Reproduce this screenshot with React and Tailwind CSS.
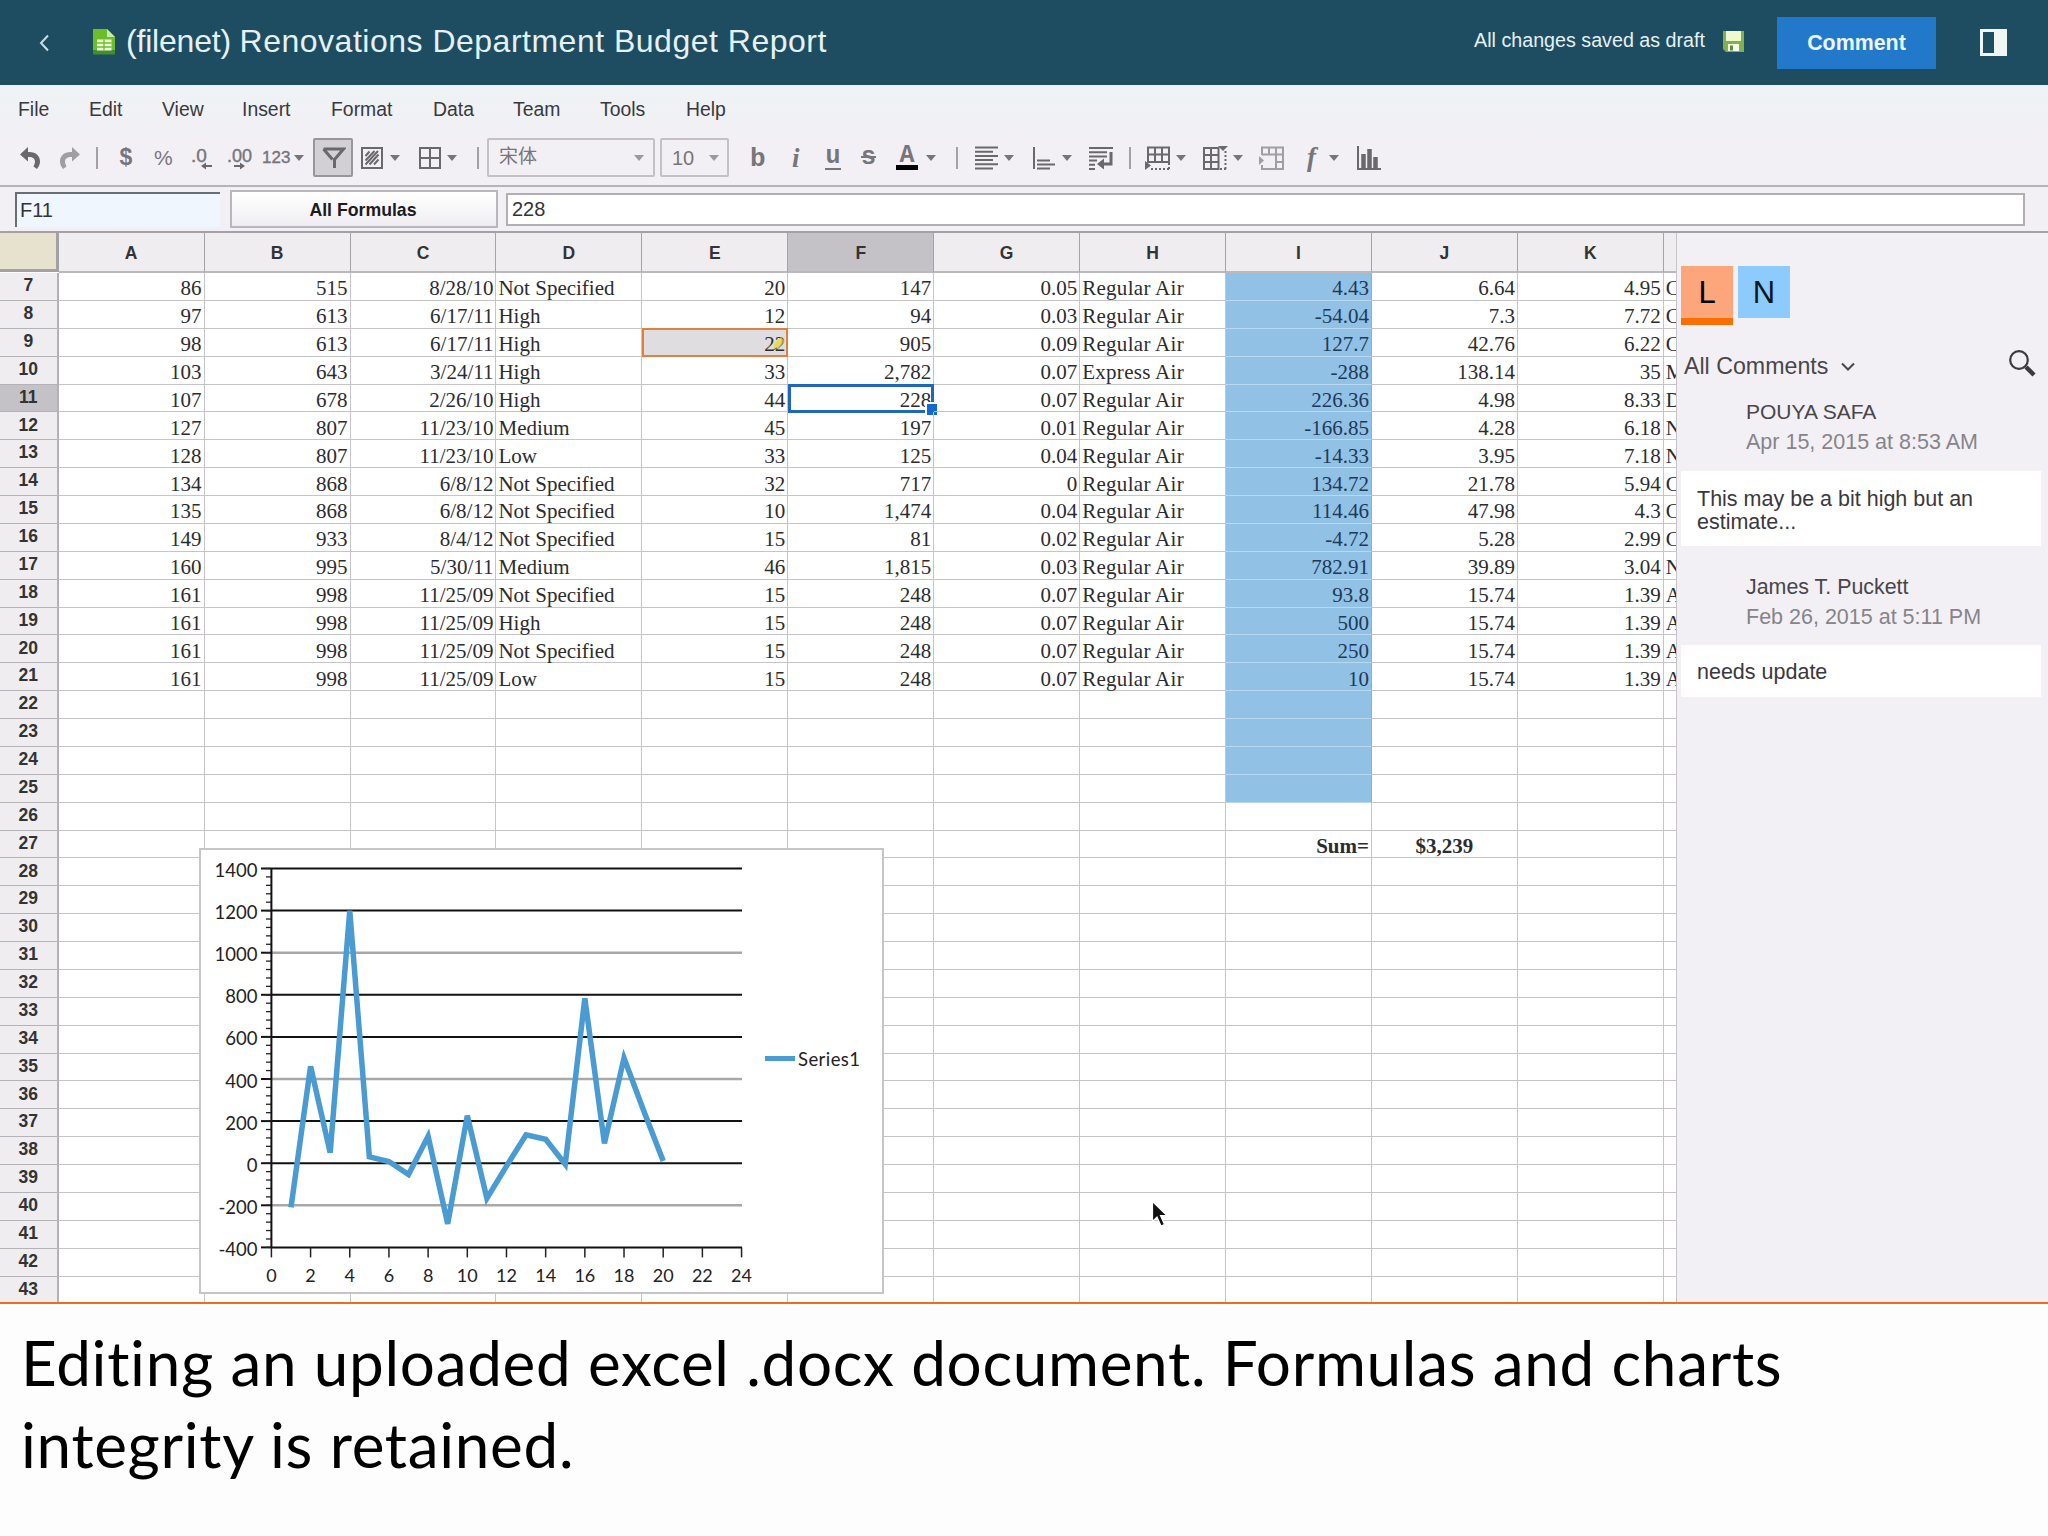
import React from 'react'

const columns = ['A', 'B', 'C', 'D', 'E', 'F', 'G', 'H', 'I', 'J', 'K']

const data = {
  7: ['86', '515', '8/28/10', 'Not Specified', '20', '147', '0.05', 'Regular Air', '4.43', '6.64', '4.95', 'C'],
  8: ['97', '613', '6/17/11', 'High', '12', '94', '0.03', 'Regular Air', '-54.04', '7.3', '7.72', 'C'],
  9: ['98', '613', '6/17/11', 'High', '22', '905', '0.09', 'Regular Air', '127.7', '42.76', '6.22', 'C'],
  10: ['103', '643', '3/24/11', 'High', '33', '2,782', '0.07', 'Express Air', '-288', '138.14', '35', 'M'],
  11: ['107', '678', '2/26/10', 'High', '44', '228', '0.07', 'Regular Air', '226.36', '4.98', '8.33', 'D'],
  12: ['127', '807', '11/23/10', 'Medium', '45', '197', '0.01', 'Regular Air', '-166.85', '4.28', '6.18', 'N'],
  13: ['128', '807', '11/23/10', 'Low', '33', '125', '0.04', 'Regular Air', '-14.33', '3.95', '7.18', 'N'],
  14: ['134', '868', '6/8/12', 'Not Specified', '32', '717', '0', 'Regular Air', '134.72', '21.78', '5.94', 'C'],
  15: ['135', '868', '6/8/12', 'Not Specified', '10', '1,474', '0.04', 'Regular Air', '114.46', '47.98', '4.3', 'C'],
  16: ['149', '933', '8/4/12', 'Not Specified', '15', '81', '0.02', 'Regular Air', '-4.72', '5.28', '2.99', 'C'],
  17: ['160', '995', '5/30/11', 'Medium', '46', '1,815', '0.03', 'Regular Air', '782.91', '39.89', '3.04', 'N'],
  18: ['161', '998', '11/25/09', 'Not Specified', '15', '248', '0.07', 'Regular Air', '93.8', '15.74', '1.39', 'A'],
  19: ['161', '998', '11/25/09', 'High', '15', '248', '0.07', 'Regular Air', '500', '15.74', '1.39', 'A'],
  20: ['161', '998', '11/25/09', 'Not Specified', '15', '248', '0.07', 'Regular Air', '250', '15.74', '1.39', 'A'],
  21: ['161', '998', '11/25/09', 'Low', '15', '248', '0.07', 'Regular Air', '10', '15.74', '1.39', 'A'],
  27: ['', '', '', '', '', '', '', '', 'Sum=', '$3,239', '', ''],
}

const rows = Array.from({ length: 37 }, (_, i) => i + 7)

const menus = [
  ['File', 'w-[71px]'],
  ['Edit', 'w-[73px]'],
  ['View', 'w-[80px]'],
  ['Insert', 'w-[89px]'],
  ['Format', 'w-[102px]'],
  ['Data', 'w-[80px]'],
  ['Team', 'w-[87px]'],
  ['Tools', 'w-[86px]'],
  ['Help', 'w-[60px]'],
]

const series = [-210, 460, 50, 1200, 30, 8, -54, 128, -288, 226, -167, -14, 135, 114, -5, 783, 94, 500, 250, 10]

function Caret({ className = '' }) {
  return (
    <svg className={'shrink-0 ' + className} width="10" height="6" viewBox="0 0 10 6">
      <path d="M0 0h10L5 6z" fill="#77757a" />
    </svg>
  )
}

function Separator({ className }) {
  return <div className={'h-[22px] w-[2px] shrink-0 bg-[#a3a1a6] ' + className} />
}

function Icon({ className, w = 24, h = 24, children }) {
  return (
    <svg className={'shrink-0 ' + className} width={w} height={h} viewBox={`0 0 ${w} ${h}`} fill="none" stroke="#6a686d" strokeWidth="2">
      {children}
    </svg>
  )
}

function Header() {
  return (
    <div className="flex h-[85px] items-center bg-[#1e4c60] text-[#e4f1f5]">
      <svg className="ml-[39px] shrink-0" width="11" height="18" viewBox="0 0 11 18" fill="none" stroke="#c9dde4" strokeWidth="2">
        <path d="M9 1.500L2 9l7 7.500" />
      </svg>
      <svg className="mb-[3px] ml-[43px] shrink-0" width="22" height="27" viewBox="0 0 22 27">
        <path d="M0 1h14l8 8v17H0z" fill="#6cbd2c" />
        <path d="M0 22h22v4.500H0z" fill="#3f8f2a" />
        <path d="M14 1l8 8h-8z" fill="#c9eba6" />
        <path d="M4 11.500h14.500v11H4z" fill="#eefbd8" />
        <path d="M4 15h14.500M4 19h14.500M11 11.500v11" stroke="#6cbd2c" strokeWidth="1.300" />
      </svg>
      <h1 className="mb-[3px] ml-[11px] whitespace-nowrap text-[32px]">
        <span className="-tracking-[0.2px]">(filenet) </span>
        <span className="tracking-[0.5px]">Renovations Department Budget Report</span>
      </h1>
      <div className="ml-auto flex items-center">
        <span className="mb-[4px] whitespace-nowrap text-[19.700px]">All changes saved as draft</span>
        <svg className="mb-[3px] ml-[18px]" width="21" height="21" viewBox="0 0 21 21">
          <path d="M0 0h21v21H3l-3-3z" fill="#7fb24c" />
          <path d="M3 0h15v10H3z" fill="#eef9d0" />
          <path d="M5 13h11v7H5z" fill="#f4fbe6" />
          <path d="M7 14.500h3v5H7z" fill="#5d8f35" />
        </svg>
        <button className="ml-[33px] mt-[1px] h-[52px] w-[159px] bg-[#2379c9] text-[21.400px] font-bold text-[#eef6fd]">Comment</button>
        <svg className="ml-[44px] mr-[41px]" width="27" height="27" viewBox="0 0 27 27">
          <path d="M1.500 1.500h24v24h-24z" fill="#1e4c60" stroke="#f0f6f3" strokeWidth="3" />
          <path d="M14 0h13v27H14z" fill="#f0f6f3" />
        </svg>
      </div>
    </div>
  )
}

function MenuBar() {
  return (
    <div className="flex h-12 items-center bg-gradient-to-b from-[#eef3f6] to-[#f2f0f4] pl-[18px] pt-[2px] text-[19.400px] text-[#3a383d]">
      {menus.map(([name, width]) => (
        <div key={name} className={'shrink-0 ' + width}>{name}</div>
      ))}
    </div>
  )
}

function Toolbar() {
  return (
    <div className="flex h-[54px] items-center border-b-2 border-[#b5b3b8] pb-[3px] text-[#77757a]">
      <Icon className="ml-[19px]" w={23}>
        <path d="M9 1L1 8.500 9 15.500v-4.500c6-.5 9 3 5.500 9.500l3.500 2.500C24.500 15 20 5 9 6z" fill="#6a686d" stroke="none" />
      </Icon>
      <Icon className="ml-[16px] opacity-60" w={23}>
        <path d="M14 1l8 7.500-8 7v-4.500c-6-.5-9 3-5.500 9.500L5 23C-1.500 15 3 5 14 6z" fill="#6a686d" stroke="none" />
      </Icon>
      <Separator className="ml-[15px]" />
      <span className="ml-[20px] w-[16px] shrink-0 text-center text-[23px] font-bold">$</span>
      <span className="ml-[20px] w-[20px] shrink-0 text-[21px]">%</span>
      <Icon className="ml-[17px]" w={22}>
        <text x="0" y="16" fontSize="19" fill="#77757a" stroke="#77757a" strokeWidth=".4" fontFamily="Liberation Sans">.0</text>
        <path d="M13 20h8" />
        <path d="M10 20l5-3.500v7z" fill="#6a686d" stroke="none" />
      </Icon>
      <Icon className="ml-[14px]" w={26}>
        <text x="0" y="16" fontSize="18" fill="#77757a" stroke="#77757a" strokeWidth=".4" fontFamily="Liberation Sans">.00</text>
        <path d="M7 20h7" />
        <path d="M18 20l-5-3.500v7z" fill="#6a686d" stroke="none" />
      </Icon>
      <span className="ml-[9px] w-[28px] shrink-0 text-[17px] [-webkit-text-stroke:0.4px_#77757a]">123</span>
      <Caret className="ml-[4px]" />
      <div className="ml-[9px] flex h-[39px] w-[40px] shrink-0 items-center justify-center rounded-[2px] border-2 border-[#98969b] bg-[#d2d0d4]">
        <Icon className="" w={25}>
          <path d="M2.500 3h20l-9 10.500v8.500M2.500 3l9 10.500" strokeWidth="3" />
        </Icon>
      </div>
      <Icon className="ml-[8px]" w={22} h={22}>
        <path d="M1 1h20v20H1z" />
        <path d="M4.500 9l4-4.500M4.500 13.500l9-9.500M4.500 17.500l12.500-13.500M8.500 17.500l9-10M13 17.500l4.500-5" />
      </Icon>
      <Caret className="ml-[7px]" />
      <Icon className="ml-[19px]" w={22} h={22}>
        <path d="M1 1h20v20H1zM11 1v20M1 11h20" />
      </Icon>
      <Caret className="ml-[6px]" />
      <Separator className="ml-[20px]" />
      <div className="ml-[8px] flex h-[39px] w-[168px] shrink-0 items-center justify-between rounded-[2px] border-2 border-[#c3c1c6] pl-[10px] pr-[9px]">
        <span className="font-['Liberation_Sans','Noto_Sans_CJK_SC',sans-serif] text-[19px]">宋体</span>
        <Caret className="opacity-70" />
      </div>
      <div className="ml-[5px] flex h-[39px] w-[69px] shrink-0 items-center justify-between rounded-[2px] border-2 border-[#c3c1c6] pl-[10px] pr-[8px]">
        <span className="text-[20px]">10</span>
        <Caret className="opacity-70" />
      </div>
      <span className="ml-[21px] mt-[2px] w-[18px] shrink-0 font-['Liberation_Mono'] text-[26px] font-bold leading-none">b</span>
      <span className="ml-[20px] mt-[2px] w-[18px] shrink-0 font-['Liberation_Serif'] text-[27px] font-bold italic leading-none pl-[4px]">i</span>
      <span className="ml-[19px] mt-[3px] flex h-[22px] w-[16px] shrink-0 justify-center border-b-2 border-[#77757a] font-['Liberation_Mono'] text-[25px] font-bold leading-[17px]">u</span>
      <span className="ml-[20px] w-[17px] shrink-0 font-['Liberation_Mono'] text-[25px] font-bold leading-none line-through decoration-2">s</span>
      <span className="ml-[18px] mt-[1px] flex h-[24px] w-[22px] shrink-0 justify-center border-b-[5px] border-black font-['Liberation_Mono'] text-[25px] font-bold leading-[20px]">A</span>
      <Caret className="ml-[8px]" />
      <Separator className="ml-[20px]" />
      <Icon className="ml-[17px]" w={24}>
        <path d="M0 1.500h23M0 5.700h18M0 9.900h23M0 14.100h18M0 18.300h23M0 22.500h18" />
      </Icon>
      <Caret className="ml-[5px]" />
      <Icon className="ml-[19px]" w={24}>
        <path d="M1 1v22M4 14.500h13M4 18.500h18M4 22.500h13" />
      </Icon>
      <Caret className="ml-[5px]" />
      <Icon className="ml-[17px]" w={24}>
        <path d="M0 2h24M0 6.200h18M0 10.400h18M0 14.600h8M0 18.800h6M0 23h6" />
        <path d="M22 6v12H14" strokeWidth="3" />
        <path d="M8 18l7-5.500v11z" fill="#6a686d" stroke="none" />
      </Icon>
      <Separator className="ml-[16px]" />
      <Icon className="ml-[14px]" w={26}>
        <path d="M3 1.500h21v14.500H3zM3 8.500h21M10 1.500V16M17 1.500V16" />
        <path d="M0 15l6 4.500L0 24z" fill="#6a686d" stroke="none" />
        <path d="M6 23h19M24 17v6" strokeDasharray="2 2" />
      </Icon>
      <Caret className="ml-[5px]" />
      <Icon className="ml-[17px]" w={26}>
        <path d="M1 2h14.500v21H1zM1 9h14.500M1 16h14.500M8 2v21" />
        <path d="M15 0h10l-5 5z" fill="#6a686d" stroke="none" />
        <path d="M22.500 5v18M17 23h6" strokeDasharray="2 2" />
      </Icon>
      <Caret className="ml-[4px]" />
      <Icon className="ml-[16px] opacity-60" w={26}>
        <path d="M3 9V1.500h21V23H3v-4M3 8.500h21M10 1.500v7M17 1.500V23M17 16h7" />
        <path d="M0 10l5 4.500L0 19z" fill="#6a686d" stroke="none" />
      </Icon>
      <span className="ml-[22px] w-[17px] shrink-0 font-['Liberation_Serif'] text-[27px] font-bold italic leading-none">f</span>
      <Caret className="ml-[5px]" />
      <Icon className="ml-[18px]" w={24}>
        <path d="M1 0v23h23" />
        <path d="M6.500 8v14M12.500 3v19M18.500 11v11" strokeWidth="4.500" />
      </Icon>
    </div>
  )
}

function FormulaBar() {
  return (
    <div className="flex h-[46px] items-center border-b-2 border-[#a3a1a6] bg-[#f2f0f4]">
      <div className="ml-[15px] flex h-[35px] w-[205px] items-center border-l-2 border-t-2 border-[#6a6c76] bg-[#f0f6fe] pl-[3px] text-[20px] text-[#333]">F11</div>
      <button className="ml-[10px] h-[38px] w-[268px] border-2 border-[#b9b7bc] bg-gradient-to-b from-white to-[#efedf1] pr-[2px] pt-[2px] text-[17.700px] font-bold text-[#1c1c1e]">All Formulas</button>
      <div className="ml-[8px] flex h-[33px] w-[1519px] items-center border-2 border-[#b1afb4] bg-white pl-[4px] text-[20px] text-[#333]">228</div>
    </div>
  )
}

function ColumnHeaders() {
  return (
    <div className="flex h-[40px] w-[1700px]">
      <div className="h-[39px] w-[58.700px] shrink-0 border-b-[3px] border-r-[3px] border-[#a3a2a0] bg-[#e6e2cd]" />
      {columns.map((c) => (
        <div
          key={c}
          className={
            'flex w-[145.930px] shrink-0 items-center justify-center border-b-2 border-r border-b-[#bbb9be] border-r-[#a5a3a8] pt-[2px] text-[17.500px] font-bold text-[#333] ' +
            (c === 'F' ? 'bg-[#c4c2c6]' : 'bg-[#efedf0]')
          }
        >
          {c}
        </div>
      ))}
      <div className="w-[36px] shrink-0 border-b-2 border-[#bbb9be] bg-[#efedf0]" />
    </div>
  )
}

function Cell({ row, col, value }) {
  const isText = col === 3 || col === 7 || col === 11
  const isHighlighted = col === 8 && row <= 25
  const isSum = row === 27
  let cls = 'relative flex shrink-0 items-center border-b border-r px-[2px] pt-[5px] text-[21px] leading-none '
  cls += col === 11 ? 'w-[36px] ' : 'w-[145.930px] '
  cls += isHighlighted ? 'border-b-[#b9d8f1] border-r-[#a9a7ac] bg-[#92c1e6] text-[#1c3a59] ' : 'border-[#c6c4c9] text-[#2c2c2e] '
  if (isSum) cls += 'font-bold '
  if (col === 7) cls += 'tracking-[0.3px] '
  if (isSum && col === 9) cls += 'justify-center'
  else cls += isText ? 'justify-start' : 'justify-end'
  return (
    <div className={cls}>
      {row === 9 && col === 4 && <div className="absolute left-0 -top-px h-[29px] w-[146px] border-2 border-[#e08040] bg-[#e0dde0]" />}
      <span className="relative">{value}</span>
      {row === 9 && col === 4 && (
        <svg className="absolute right-[2px] top-[7px]" width="14" height="15" viewBox="0 0 14 15">
          <path d="M2 14l1-6 7-7 4 4-7 8z" fill="#ecd51f" opacity=".7" />
          <path d="M2 14l4-2" stroke="#555" />
        </svg>
      )}
      {row === 11 && col === 5 && (
        <>
          <div className="absolute left-0 -top-px h-[29px] w-[146px] border-[3px] border-[#1f66bd]" />
          <div className="absolute -bottom-[4px] -right-[4px] h-[13px] w-[12px] border-l-2 border-t-2 border-white bg-[#1568cf]" />
        </>
      )}
    </div>
  )
}

function Chart() {
  const x = (v) => 72.4 + v * 19.59
  const y = (v) => 315.2 - (v / 200) * 42.1
  const major = [1400, 1200, 1000, 800, 600, 400, 200, 0, -200, -400]
  const minor = Array.from({ length: 46 }, (_, i) => -400 + i * 40)
  const ticks = Array.from({ length: 13 }, (_, i) => i * 2)
  const light = [1000, 400, -200]
  return (
    <div className="absolute left-[199px] top-[615px] h-[446px] w-[685px] border-2 border-[#c6c4c9] bg-white">
      <svg className="-ml-[2px] -mt-[2px]" width="685" height="446" viewBox="0 0 685 446" fontFamily="Lato" fontSize="18.500" fill="#222">
        {major.map((v) => (
          <g key={v}>
            <path d={`M72 ${y(v)}H543`} stroke={light.includes(v) ? '#a8a8a8' : '#111'} strokeWidth={light.includes(v) ? 2.5 : 2} />
            <path d={`M62 ${y(v)}h10`} stroke="#111" strokeWidth="2" />
            <text x="58.500" y={y(v) + 8.5} textAnchor="end">{v}</text>
          </g>
        ))}
        {minor.map((v) => (
          <path key={v} d={`M67 ${y(v)}h5`} stroke="#222" strokeWidth="1.300" />
        ))}
        <path d={`M72.400 ${y(1400)}V${y(-400)}`} stroke="#111" strokeWidth="2" />
        {ticks.map((v) => (
          <g key={v}>
            <path d={`M${x(v)} ${y(-400)}v10`} stroke="#222" strokeWidth="1.500" />
            <text x={x(v)} y="434" fontSize="18" textAnchor="middle">{v}</text>
          </g>
        ))}
        <polyline points={series.map((v, i) => `${x(i + 1)},${y(v)}`).join(' ')} fill="none" stroke="#4a9bd1" strokeWidth="5.500" />
        <path d="M566 210.500h30" stroke="#4a9bd1" strokeWidth="5" />
        <text x="599" y="217.500" textLength="62">Series1</text>
      </svg>
    </div>
  )
}

function Sheet() {
  return (
    <div className="relative h-full w-[1677px] shrink-0 overflow-hidden border-r border-[#c6c4c9] bg-white">
      <ColumnHeaders />
      <div className="w-[1700px] font-['Liberation_Serif']">
        {rows.map((r) => (
          <div key={r} className="flex h-[27.880px]">
            <div
              className={
                "flex w-[58.700px] shrink-0 items-center justify-center border-b border-r-2 border-[#b4b2b7] pb-[1px] font-['Liberation_Sans'] text-[17.500px] font-bold leading-none text-[#333] " +
                (r === 11 ? 'bg-[#c4c2c6]' : 'bg-[#efedf0]')
              }
            >
              {r}
            </div>
            {[...columns, 'L'].map((c, i) => (
              <Cell key={c} row={r} col={i} value={data[r] ? data[r][i] : ''} />
            ))}
          </div>
        ))}
      </div>
      <Chart />
      {/* mouse pointer */}
      <svg className="absolute left-[1151px] top-[967px]" width="18" height="28" viewBox="0 0 18 28">
        <path d="M1.500 1.500v20l4.500-4.500 4 9 3.500-1.500-4-9h6.500z" fill="#111" stroke="#fff" strokeWidth="1.200" />
      </svg>
    </div>
  )
}

function Comments() {
  return (
    <div className="flex-1 bg-[#f2f0f4] pl-[4px] pr-[7px] pt-[33px] text-[21px] leading-[23px] text-[#48464b]">
      <div className="flex gap-[5px]">
        <div className="flex h-[59px] w-[52px] items-center justify-center border-b-[7px] border-[#f96f05] bg-[#fda67c] text-[31px] text-black">L</div>
        <div className="flex h-[52px] w-[52px] items-center justify-center bg-[#8ccbfb] text-[31px] text-[#0c1722]">N</div>
      </div>
      <div className="mt-[23px] flex h-[36px] items-center pl-[3px]">
        <span className="text-[23.200px]">All Comments</span>
        <svg className="ml-[13px] mt-[1px]" width="14" height="10" viewBox="0 0 14 10" fill="none" stroke="#48464b" strokeWidth="2">
          <path d="M1 1.500l6 6 6-6" />
        </svg>
        <svg className="-mt-[6px] ml-auto mr-[5px]" width="28" height="28" viewBox="0 0 28 28" fill="none" stroke="#3c3a3f">
          <circle cx="11" cy="11" r="8.800" strokeWidth="2.200" />
          <path d="M18 18l8 8" strokeWidth="4.500" />
        </svg>
      </div>
      <div className="pl-[65px] pt-[16px]">
        <div>POUYA SAFA</div>
        <div className="mt-[8px] text-[21.500px] text-[#86848a]">Apr 15, 2015 at 8:53 AM</div>
      </div>
      <div className="mt-[17px] h-[75px] bg-white pl-[16px] pt-[17px] text-[21.500px] text-[#3a383d]">
        This may be a bit high but an
        <br />
        estimate...
      </div>
      <div className="pl-[65px] pt-[30px]">
        <div className="text-[21.400px]">James T. Puckett</div>
        <div className="mt-[7px] text-[21.500px] text-[#86848a]">Feb 26, 2015 at 5:11 PM</div>
      </div>
      <div className="mt-[16px] h-[52px] bg-white pl-[16px] pt-[16px] text-[21.500px] text-[#3a383d]">needs update</div>
    </div>
  )
}

export default function App() {
  return (
    <div className="flex h-[1536px] w-[2048px] flex-col overflow-hidden bg-[#f2f0f4] font-['Liberation_Sans',Arial,sans-serif]">
      <Header />
      <MenuBar />
      <Toolbar />
      <FormulaBar />
      <div className="flex h-[1069px] shrink-0">
        <Sheet />
        <Comments />
      </div>
      <div className="flex-1 border-t-2 border-[#ec6d1c] bg-[#fdfdfd] pl-[21px] pt-[17px] font-[Lato] text-[62px] leading-[82px] tracking-[0.69px] text-black">
        <p className="whitespace-nowrap [font-variant-ligatures:none]">
          Editing an uploaded excel .docx document. Formulas and charts
          <br />
          integrity is retained.
        </p>
      </div>
    </div>
  )
}
